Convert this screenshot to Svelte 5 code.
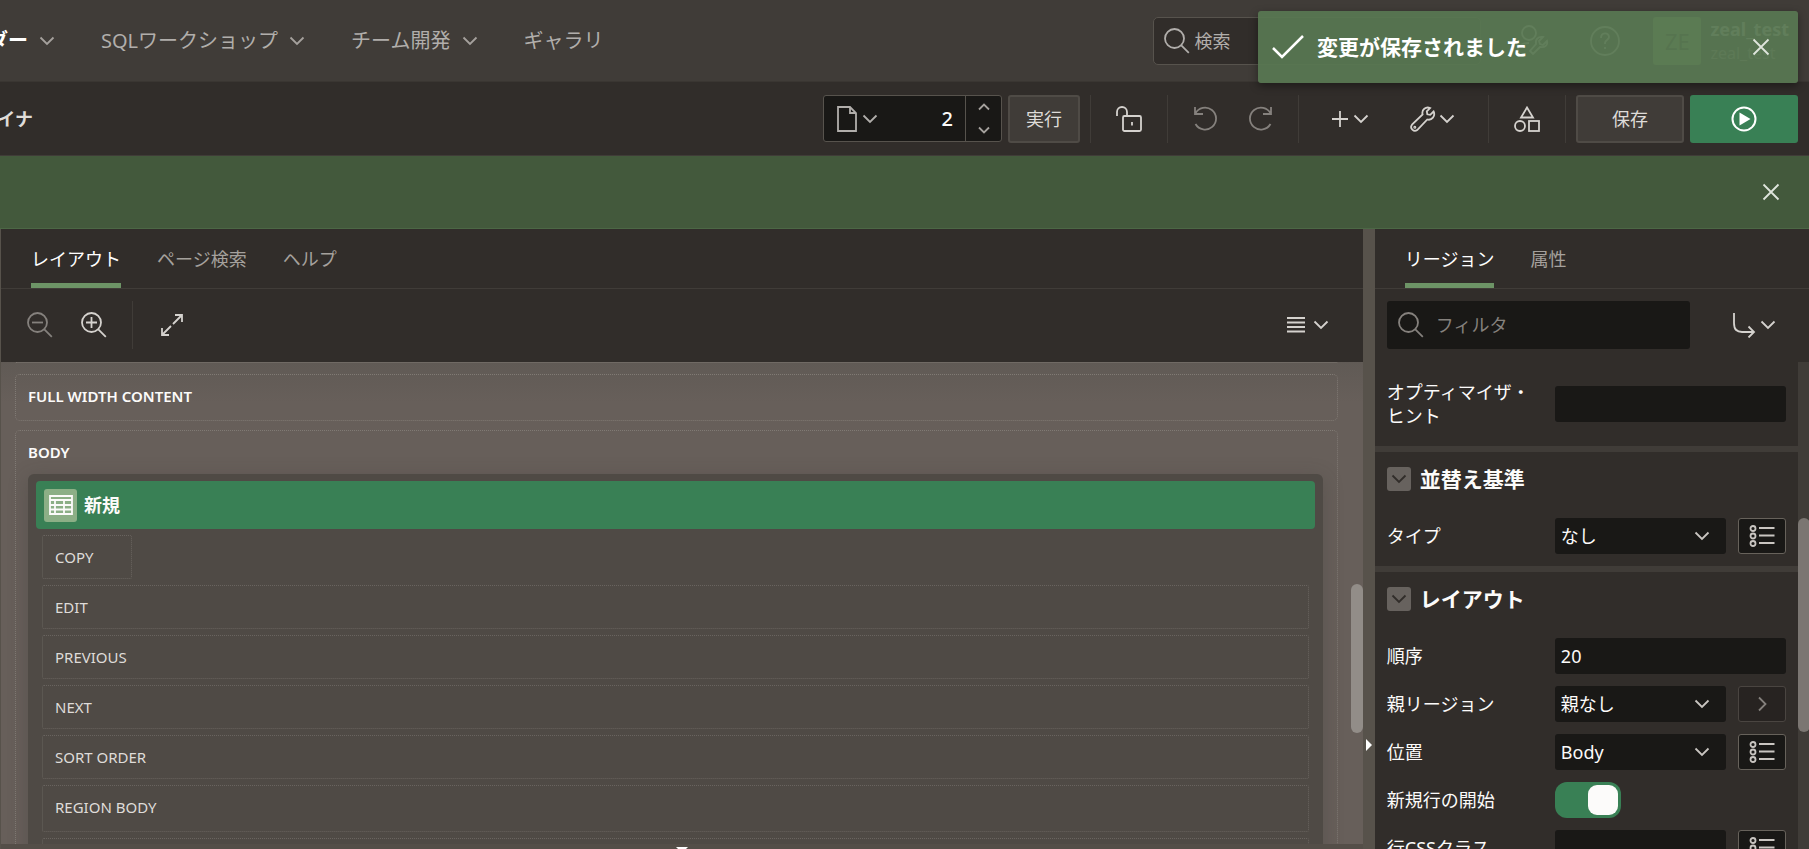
<script lang="ts">
  interface Item {
    label: string;
    menu?: boolean;
    active?: boolean;
  }

  interface Property {
    id: string;
    label: string;
    kind: 'text' | 'select' | 'switch';
    value?: string;
    action?: 'list' | 'right';
  }

  const navItems: Item[] = [
    { label: 'SQLワークショップ', menu: true },
    { label: 'チーム開発', menu: true },
    { label: 'ギャラリ' }
  ];

  const layoutTabs: Item[] = [
    { label: 'レイアウト', active: true },
    { label: 'ページ検索' },
    { label: 'ヘルプ' }
  ];

  const propertyTabs: Item[] = [{ label: 'リージョン', active: true }, { label: '属性' }];

  const slots = ['EDIT', 'PREVIOUS', 'NEXT', 'SORT ORDER'];

  const groups: { title: string; rows: Property[] }[] = [
    {
      title: '並替え基準',
      rows: [{ id: 'order-type', label: 'タイプ', kind: 'select', value: 'なし', action: 'list' }]
    },
    {
      title: 'レイアウト',
      rows: [
        { id: 'sequence', label: '順序', kind: 'text', value: '20' },
        { id: 'parent', label: '親リージョン', kind: 'select', value: '親なし', action: 'right' },
        { id: 'position', label: '位置', kind: 'select', value: 'Body', action: 'list' },
        { id: 'new-row', label: '新規行の開始', kind: 'switch' },
        { id: 'row-css', label: '行CSSクラス', kind: 'text', value: '', action: 'list' }
      ]
    }
  ];

  let pageNumber = $state('2');
  let toastOpen = $state(true);
</script>

{#snippet chevron()}
  <svg class="chevron" width="16" height="16" viewBox="0 0 16 16"><path d="M1.5 4.5 8 11l6.500-6.500" /></svg>
{/snippet}

{#snippet cross()}
  <svg width="18" height="18" viewBox="0 0 18 18"><path d="M1.500 1.500l15 15M16.500 1.500l-15 15" /></svg>
{/snippet}

{#snippet magnifier(sign: string)}
  <svg width="26" height="26" viewBox="0 0 26 26">
    <circle cx="10.500" cy="10.500" r="9.500" /><path d="M17.300 17.300l7.500 7.500" />
    {#if sign}<path d={sign} />{/if}
  </svg>
{/snippet}

{#snippet listIcon()}
  <svg width="26" height="22" viewBox="0 0 26 22">
    <circle cx="4" cy="3.500" r="2.500" /><circle cx="4" cy="11" r="2.500" /><circle cx="4" cy="18.500" r="2.500" />
    <path d="M10 3h15.500M10 10.500h15.500M10 18h15.500" />
  </svg>
{/snippet}

{#snippet tabs(items: Item[])}
  <div class="tabs" role="tablist">
    {#each items as tab}
      <button class="tab" class:active={tab.active} role="tab" aria-selected={!!tab.active}>{tab.label}</button>
    {/each}
  </div>
{/snippet}

<div class="builder">
  <header class="header">
    <nav class="nav">
      <button class="nav-item current"><span class="clip">ダー</span>{@render chevron()}</button>
      {#each navItems as item}
        <button class="nav-item">{item.label}{#if item.menu}{@render chevron()}{/if}</button>
      {/each}
    </nav>
    <label class="search">
      {@render magnifier('')}
      <input type="search" placeholder="検索" aria-label="検索" />
    </label>
    <div class="account">
      <button class="ghost" aria-label="管理">
        <svg width="34" height="34" viewBox="0 0 34 34">
          <circle cx="14" cy="9" r="7" /><path d="M2 29c0-7 5-10 12-10" />
          <path d="M32 17l-4 4-3-1-1-3 4-4c-5-1-8 3-7 7l-6 7 3 3 7-7c5 1 8-2 7-6z" />
        </svg>
      </button>
      <button class="ghost" aria-label="ヘルプ・メニュー">
        <svg width="32" height="32" viewBox="0 0 32 32">
          <circle cx="16" cy="16" r="14" /><path d="M12 13c0-6 8-6 8-1 0 3-4 3-4 6v1M16 22v2" />
        </svg>
      </button>
      <button class="user">
        <span class="avatar">ZE</span>
        <span class="names"><b>zeal_test</b><span>zeal_test</span></span>
      </button>
    </div>
  </header>

  <div class="toolbar">
    <h1 class="title clip">イナ</h1>
    <div class="page-select">
      <button class="page-menu" aria-label="ページ">
        <svg width="20" height="26" viewBox="0 0 20 26"><path d="M1 1h12l6 6v18H1zM13 1v6h6" /></svg>
        {@render chevron()}
      </button>
      <input aria-label="ページ番号" bind:value={pageNumber} />
      <span class="spinner">
        <button class="up" aria-label="次のページ"><svg width="12" height="8" viewBox="0 0 12 8"><path d="M1 6.500l5-5 5 5" /></svg></button>
        <button class="down" aria-label="前のページ"><svg width="12" height="8" viewBox="0 0 12 8"><path d="M1 1.500l5 5 5-5" /></svg></button>
      </span>
    </div>
    <button class="btn go">実行</button>
    <span class="group">
      <button class="tool" aria-label="ロック">
        <svg width="26" height="26" viewBox="0 0 26 26">
          <path d="M1 10V6a5 5 0 0 1 10 0v4" /><rect x="7" y="10" width="18" height="15" rx="1.500" /><path d="M16 16v3.500" />
        </svg>
      </button>
    </span>
    <span class="group">
      <button class="tool disabled" disabled aria-label="元に戻す">
        <svg width="26" height="26" viewBox="0 0 26 26"><path d="M2 1v7h8M2.300 7.500A11 11 0 1 1 2.500 18" /></svg>
      </button>
      <button class="tool disabled" disabled aria-label="やり直し">
        <svg width="26" height="26" viewBox="0 0 26 26"><path d="M24 1v7h-8M23.700 7.500A11 11 0 1 0 23.500 18" /></svg>
      </button>
    </span>
    <span class="group wide">
      <button class="tool add" aria-label="作成">
        <svg width="18" height="18" viewBox="0 0 18 18"><path d="M9 1v16M1 9h16" /></svg>
        {@render chevron()}
      </button>
      <button class="tool tight" aria-label="ユーティリティ">
        <svg width="26" height="26" viewBox="0 0 26 26">
          <path d="M23.600 5.500l-3.400 3.300-2.900-.5-.5-2.900 3.300-3.300c-4.200-1.900-8.800 1.700-7.500 6.300L2 18.700c-2.700 3.500 1.900 7.900 5.200 5.300L17.300 13.500c4.500 1.200 8.400-3.500 6.300-8z" />
          <circle cx="4.800" cy="21.300" r=".6" />
        </svg>
        {@render chevron()}
      </button>
    </span>
    <span class="group">
      <button class="tool" aria-label="共有コンポーネント">
        <svg width="26" height="26" viewBox="0 0 26 26">
          <path d="M13 1.500l6 10H7z" /><circle cx="6" cy="20" r="5" /><rect x="15" y="15" width="10" height="10" />
        </svg>
      </button>
    </span>
    <span class="group final">
      <button class="btn save">保存</button>
      <button class="btn run" aria-label="保存して実行">
        <svg width="26" height="26" viewBox="0 0 26 26">
          <circle cx="13" cy="13" r="11.500" stroke-width="2" /><path d="M8.500 6.500l11 6.500-11 6.500z" fill="currentColor" stroke="none" />
        </svg>
      </button>
    </span>
  </div>

  <div class="banner">
    <button class="close" aria-label="閉じる">{@render cross()}</button>
  </div>

  <main class="workspace">
    <section class="layout-pane">
      {@render tabs(layoutTabs)}
      <div class="pane-tools">
        <button class="tool disabled" disabled aria-label="縮小">{@render magnifier('M5 10.5h11')}</button>
        <button class="tool" aria-label="拡大">{@render magnifier('M5 10.5h11M10.5 5v11')}</button>
        <button class="tool expand" aria-label="展開">
          <svg width="22" height="22" viewBox="0 0 22 22"><path d="M12 10l9-9M14 1h7v7M10 12l-9 9M1 14v7h7" /></svg>
        </button>
        <button class="tool options" aria-label="レイアウト・メニュー">
          <svg width="18" height="16" viewBox="0 0 18 16"><path d="M0 1h18M0 5.500h18M0 10h18M0 14.500h18" /></svg>
          {@render chevron()}
        </button>
      </div>
      <div class="canvas">
        <div class="container above"></div>
        <div class="container"><h2>FULL WIDTH CONTENT</h2></div>
        <div class="container body">
          <h2>BODY</h2>
          <div class="region">
            <div class="region-head">
              <span class="tile">
                <svg width="24" height="20" viewBox="0 0 24 20">
                  <path d="M1 1h22v18H1zM1 5h22M1 10h22M1 14.500h22M6 5v14M15 5v14" />
                </svg>
              </span>
              新規
            </div>
            <div class="slots">
              <div class="slot copy">COPY</div>
              {#each slots as slot}
                <div class="slot">{slot}</div>
              {/each}
              <div class="slot region-body">REGION BODY</div>
              <div class="slot"></div>
            </div>
          </div>
        </div>
        <span class="thumb"></span>
      </div>
      <div class="bottom-splitter"><span></span></div>
    </section>

    <div class="splitter"><span></span></div>

    <section class="property-pane">
      {@render tabs(propertyTabs)}
      <div class="pane-tools filter-row">
        <label class="filter">
          {@render magnifier('')}
          <input type="search" placeholder="フィルタ" aria-label="フィルタ" />
        </label>
        <button class="tool goto" aria-label="グループに移動">
          <svg width="24" height="26" viewBox="0 0 24 26"><path d="M2 1v10c0 7 3 9 8 9h11M16.500 14.500L22 20l-5.500 5.500" /></svg>
          {@render chevron()}
        </button>
      </div>
      <div class="properties">
        <div class="property-list">
          <div class="hint property">
            <label for="hint">オプティマイザ・ヒント</label>
            <input id="hint" />
          </div>
          {#each groups as group}
            <section class="property-group">
              <h3><button aria-label={group.title}>{@render chevron()}</button>{group.title}</h3>
              {#each group.rows as row}
                <div class="property">
                  <label for={row.id}>{row.label}</label>
                  {#if row.kind === 'select'}
                    <span class="select">
                      <select id={row.id}><option>{row.value}</option></select>
                      {@render chevron()}
                    </span>
                  {:else if row.kind === 'switch'}
                    <input id={row.id} type="checkbox" role="switch" checked />
                  {:else}
                    <input id={row.id} value={row.value} />
                  {/if}
                  {#if row.action === 'list'}
                    <button class="lov" aria-label="{row.label}の選択">{@render listIcon()}</button>
                  {:else if row.action === 'right'}
                    <button class="lov off" disabled aria-label="{row.label}に移動">
                      <svg width="16" height="16" viewBox="0 0 16 16"><path d="M5 1.500L11.500 8 5 14.500" /></svg>
                    </button>
                  {/if}
                </div>
              {/each}
            </section>
          {/each}
        </div>
        <div class="track"><span class="thumb"></span></div>
      </div>
    </section>
  </main>

  {#if toastOpen}
    <div class="toast" role="status">
      <svg width="34" height="26" viewBox="0 0 34 26"><path d="M2 14l9 9L32 2" /></svg>
      <strong>変更が保存されました</strong>
      <button class="close" aria-label="通知を閉じる" onclick={() => (toastOpen = false)}>{@render cross()}</button>
    </div>
  {/if}
</div>

<style>
  :global(body) {
    margin: 0;
    background: #312d2a;
  }

  .builder {
    --panel: #312d2a;
    --line: #403c38;
    --field: #191816;
    --green: #398055;
    position: relative;
    display: flex;
    flex-direction: column;
    height: 100vh;
    overflow: hidden;
    background: var(--panel);
    color: #fcfbfa;
    font: 18px/24px "Noto Sans", "Noto Sans CJK JP", sans-serif;
  }

  .builder :global(*) {
    box-sizing: border-box;
  }

  button,
  input,
  select {
    font: inherit;
    color: inherit;
    margin: 0;
    padding: 0;
    border: 0;
    background: none;
    outline: none;
  }

  input,
  select {
    min-width: 0;
    appearance: none;
  }

  h1,
  h2,
  h3 {
    margin: 0;
  }

  svg {
    flex: none;
    display: block;
    fill: none;
    stroke: currentColor;
    stroke-width: 1.8;
  }

  .clip {
    display: flex;
    justify-content: flex-end;
    overflow: hidden;
    white-space: nowrap;
  }

  /* Header */
  .header {
    flex: none;
    display: flex;
    align-items: center;
    height: 82px;
    padding-right: 20px;
    background: #403c38;
    border-bottom: 1px solid #3a3632;
  }

  .nav {
    flex: 1;
    display: flex;
    gap: 46px;
  }

  .nav-item {
    display: flex;
    align-items: center;
    gap: 11px;
    color: #b1aeab;
    font-size: 20px;
    white-space: nowrap;
  }

  .nav-item.current {
    color: #fff;
    font-weight: 600;
  }

  .nav-item .clip {
    width: 28px;
  }

  .nav-item svg {
    color: #a5a19d;
  }

  .search {
    display: flex;
    align-items: center;
    gap: 4px;
    width: 328px;
    height: 48px;
    padding-left: 10px;
    border: 1px solid #57534d;
    border-radius: 5px;
    background: var(--panel);
    color: #b1aeab;
  }

  input::placeholder {
    color: inherit;
    opacity: 1;
  }

  .account {
    display: flex;
    align-items: center;
    padding-left: 34px;
    gap: 40px;
    color: #d5d2ce;
  }

  .user {
    display: flex;
    align-items: center;
    gap: 9px;
    text-align: left;
    margin-left: -8px;
  }

  .avatar {
    display: grid;
    place-items: center;
    width: 48px;
    height: 48px;
    border-radius: 3px;
    background: #83a860;
    color: #36452f;
    font-size: 22px;
  }

  .names {
    display: grid;
  }

  .names span {
    font-size: 16px;
    color: #96918c;
  }

  /* Toolbar */
  .toolbar {
    flex: none;
    display: flex;
    align-items: center;
    height: 74px;
    padding: 0 11px 0 0;
    border-bottom: 1px solid #403c38;
  }

  .title {
    width: 33px;
    margin-right: auto;
    color: #dfdcd9;
    font-size: 18px;
    font-weight: 600;
  }

  .page-select {
    display: flex;
    width: 179px;
    height: 47px;
    border: 1px solid #57534d;
    border-radius: 3px;
    background: var(--field);
  }

  .page-menu {
    display: flex;
    align-items: center;
    gap: 5px;
    padding-left: 13px;
    color: #b1aeab;
  }

  .page-select input {
    flex: 1;
    padding-right: 12px;
    text-align: right;
    font-size: 20px;
    font-weight: 500;
  }

  .spinner {
    display: flex;
    flex-direction: column;
    width: 36px;
    border-left: 1px solid #57534d;
    color: #a5a19d;
  }

  .spinner button {
    flex: 1;
    display: grid;
    place-items: center;
  }

  .btn {
    display: grid;
    place-items: center;
    height: 48px;
    width: 108px;
    border: 2px solid #4f4b46;
    border-radius: 3px;
    background: #403c38;
    color: #dfdcd9;
  }

  .go {
    width: 72px;
    margin: 0 10px 0 6px;
  }

  .run {
    border: 0;
    background: var(--green);
    color: #fff;
  }

  .group {
    display: flex;
    align-items: center;
    gap: 28px;
    height: 48px;
    padding: 0 25px;
    border-left: 1px solid #403c38;
  }

  .group.wide {
    gap: 41px;
    padding: 0 33px 0 32px;
  }

  .group.final {
    gap: 6px;
    padding: 0 0 0 10px;
  }

  .tool {
    display: flex;
    align-items: center;
    gap: 8px;
    color: #d5d2ce;
  }

  .tool.add {
    gap: 4px;
  }

  .tool.tight {
    gap: 3px;
  }

  .tool.disabled {
    color: #85817d;
  }

  .banner {
    flex: none;
    display: flex;
    align-items: center;
    justify-content: flex-end;
    height: 73px;
    padding-right: 29px;
    background: #43593c;
    border-bottom: 1px solid #4c6745;
    color: #dfe5dc;
  }

  /* Panes */
  .workspace {
    flex: 1;
    display: flex;
    min-height: 0;
  }

  .layout-pane {
    flex: 1;
    display: flex;
    flex-direction: column;
    min-width: 0;
    border-left: 1px solid #57524b;
  }

  .tabs {
    flex: none;
    display: flex;
    gap: 36px;
    height: 60px;
    padding: 0 30px;
    border-bottom: 1px solid var(--line);
  }

  .tab {
    color: #a5a19d;
    border: solid transparent;
    border-width: 5px 0;
  }

  .tab.active {
    color: #fff;
    border-bottom-color: #6d9466;
  }

  .pane-tools {
    flex: none;
    display: flex;
    align-items: center;
    gap: 28px;
    height: 73px;
    padding: 0 34px 2px 26px;
  }

  .expand {
    height: 48px;
    margin-left: -3px;
    padding-left: 28px;
    border-left: 1px solid var(--line);
  }

  .options {
    margin-left: auto;
  }

  .canvas {
    position: relative;
    flex: 1;
    display: flex;
    flex-direction: column;
    gap: 9px;
    min-height: 0;
    overflow: hidden;
    padding: 0 25px 0 14px;
    background: linear-gradient(#605a55, #675f5a 40px, #675f5a);
  }

  .container {
    flex: none;
    min-height: 47px;
    padding: 9px 14px 9px 12px;
    border: 1px dotted #807a74;
    border-radius: 5px;
  }

  .container.above {
    min-height: 3px;
    padding: 0;
    border-width: 1px 0 0;
  }

  .container h2 {
    font-size: 15px;
    font-weight: 600;
  }

  .container.body {
    flex: 1 0 500px;
  }

  .region {
    margin-top: 10px;
    padding: 7px 8px;
    border-radius: 6px;
    background: #4f4a45;
    box-shadow: 0 4px 20px rgba(60, 56, 52, 0.3);
  }

  .region-head {
    display: flex;
    align-items: center;
    gap: 7px;
    height: 48px;
    padding-left: 8px;
    border-radius: 4px;
    background: var(--green);
    font-weight: 700;
  }

  .tile {
    display: grid;
    place-items: center;
    width: 33px;
    height: 33px;
    border-radius: 3px;
    background: #8caf86;
  }

  .slots {
    display: flex;
    flex-direction: column;
    gap: 6px;
    padding: 6px 6px 0;
  }

  .slot {
    height: 44px;
    padding: 9px 12px;
    border: 1px dotted #69645f;
    border-radius: 2px;
    color: #dfdcd9;
    font-size: 15px;
  }

  .slot.copy {
    width: 90px;
  }

  .slot.region-body {
    height: 47px;
  }

  .thumb {
    position: absolute;
    border-radius: 6px;
  }

  .canvas .thumb {
    right: 0;
    top: 46%;
    width: 12px;
    height: 31%;
    background: #928d88;
  }

  .bottom-splitter {
    flex: none;
    display: flex;
    justify-content: center;
    height: 5px;
    padding-top: 3px;
    overflow: hidden;
    background: #544e48;
  }

  .bottom-splitter span {
    border: 6px solid transparent;
    border-top-color: #fff;
  }

  .splitter {
    flex: none;
    display: flex;
    align-items: center;
    width: 12px;
    padding: 412px 0 0 3px;
    background: #57524b;
  }

  .splitter span {
    border: 6px solid transparent;
    border-width: 6px 0 6px 6px;
    border-left-color: #fff;
  }

  /* Property editor */
  .property-pane {
    flex: none;
    display: flex;
    flex-direction: column;
    width: 24%;
    min-width: 400px;
  }

  .filter-row {
    justify-content: space-between;
    padding: 0 33px 2px 12px;
  }

  .filter {
    display: flex;
    align-items: center;
    gap: 12px;
    width: 303px;
    height: 48px;
    padding-left: 11px;
    border-radius: 3px;
    background: var(--field);
    color: #85817d;
  }

  .goto {
    gap: 4px;
  }

  .properties {
    flex: 1;
    display: flex;
    min-height: 0;
    overflow: hidden;
  }

  .property-list {
    flex: 1;
    min-width: 0;
  }

  .property {
    display: flex;
    align-items: center;
    gap: 12px;
    height: 36px;
    margin-bottom: 12px;
    padding: 0 12px;
  }

  .property label {
    flex: none;
    width: 156px;
    padding-right: 10px;
  }

  .property.hint {
    height: 48px;
    margin: 18px 0;
  }

  .property input,
  .select {
    flex: 1;
    height: 36px;
    padding: 0 6px;
    border-radius: 3px;
    background: var(--field);
  }

  .select {
    display: flex;
    align-items: center;
    padding-right: 16px;
  }

  .select select {
    flex: 1;
  }

  .select svg,
  .lov {
    color: #c9c5c1;
  }

  .property input[type="checkbox"] {
    flex: none;
    width: 66px;
    padding: 3px;
    border-radius: 12px;
    background: var(--green);
  }

  .property input[type="checkbox"]::before {
    content: "";
    display: block;
    width: 30px;
    height: 30px;
    margin-left: auto;
    border-radius: 9px;
    background: #fcfbfa;
  }

  .lov {
    display: grid;
    place-items: center;
    width: 48px;
    height: 36px;
    border: 1px solid #67625b;
    border-radius: 3px;
    background: var(--field);
  }

  .lov.off {
    border-color: #4a4541;
    background: #272321;
    color: #85817d;
  }

  .property-group {
    border-top: 6px solid var(--line);
    overflow: hidden;
  }

  .property-group h3 {
    display: flex;
    align-items: center;
    gap: 9px;
    padding: 15px 12px 27px;
    font-size: 21px;
    font-weight: 700;
  }

  .property-group h3 button {
    display: grid;
    place-items: center;
    width: 24px;
    height: 24px;
    border-radius: 3px;
    background: #67625e;
    color: #312d2a;
  }

  .track {
    position: relative;
    width: 11px;
    background: var(--line);
  }

  .track .thumb {
    top: 32%;
    left: 0;
    width: 12px;
    height: 44%;
    background: #7b7672;
  }

  /* Notification over the header */
  .toast {
    position: absolute;
    top: 11px;
    right: 11px;
    display: flex;
    align-items: center;
    gap: 12px;
    width: 540px;
    height: 72px;
    padding: 0 28px 0 13px;
    border-radius: 3px;
    background: rgba(88, 119, 82, 0.93);
    box-shadow: 0 3px 8px rgba(0, 0, 0, 0.4);
    color: #fff;
  }

  .toast > svg {
    stroke-width: 2.5;
  }

  .toast strong {
    flex: 1;
    font-size: 21px;
    font-weight: 700;
  }

  .toast .close {
    color: #dfe5dc;
  }
</style>
